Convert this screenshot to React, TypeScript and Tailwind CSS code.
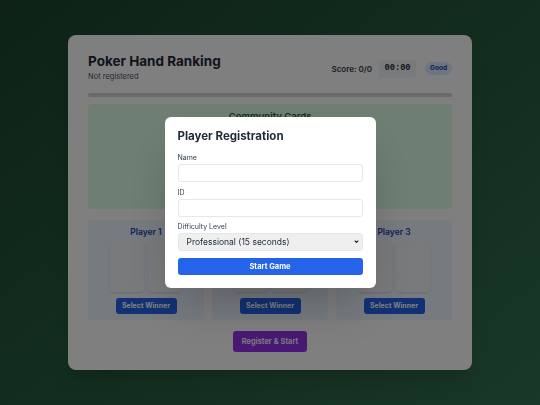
import { useState } from "react"

const players = ["Player 1", "Player 2", "Player 3"]

function PlayerBox({ name }: { name: string }) {
  return (
    <div className="flex h-[100px] flex-col items-center rounded-[4px] bg-[#eff6ff] pt-[6px]">
      <h3 className="text-[8.5px] font-semibold leading-[12px] text-[#1e40af]">{name}</h3>
      <div className="mt-[5px] flex gap-[4px]">
        <div className="h-[49px] w-[34px] rounded-[3px] bg-[#f3f4f6] shadow-sm" />
        <div className="h-[49px] w-[34px] rounded-[3px] bg-[#f3f4f6] shadow-sm" />
      </div>
      <button className="mt-[6px] h-[16px] w-[61px] rounded-[3px] bg-[#2563eb] text-[7px] font-bold text-white">
        Select Winner
      </button>
    </div>
  )
}

export default function App() {
  const [name, setName] = useState("")
  const [id, setId] = useState("")
  const [level, setLevel] = useState("professional")

  return (
    <div className="relative flex h-[405px] w-full justify-center bg-linear-to-br from-[#1c442e] via-[#255a3c] to-[#32704f] pt-[35px] font-['Inter',sans-serif]">
      {/* game board */}
      <div className="h-[335px] w-[404px] rounded-lg bg-white px-5 pt-[17px] shadow-xl">
        <div className="flex items-center justify-between">
          <div>
            <h1 className="text-[13.5px] font-bold leading-[19px] text-[#1f2937]">Poker Hand Ranking</h1>
            <p className="text-[7.5px] leading-[11px] text-[#4b5563]">Not registered</p>
          </div>
          <div className="mt-[3px] flex items-center gap-[7px]">
            <span className="text-[8px] font-semibold text-[#374151]">Score: 0/0</span>
            <span className="flex h-[18px] w-[37px] items-center justify-center rounded-[3px] bg-[#f3f4f6] font-['Liberation_Mono',monospace] text-[8.7px] font-bold text-[#1f2937]">
              00:00
            </span>
            <span className="ml-[2px] rounded-full bg-[#dbeafe] px-[5px] py-[2px] text-[6.5px] font-bold text-[#1e40af]">Good</span>
          </div>
        </div>

        <div className="mt-[11px] h-[4px] w-full rounded-full bg-[#d1d5db]" />

        <div className="mt-[7px] h-[105px] rounded-[4px] bg-[#dcfce7] pt-[6px] text-center">
          <h2 className="text-[9.5px] font-semibold leading-[13px] text-[#166534]">Community Cards</h2>
        </div>

        <div className="mt-[11px] grid grid-cols-3 gap-2">
          {players.map((p) => (
            <PlayerBox key={p} name={p} />
          ))}
        </div>

        <div className="mt-[11px] flex justify-center">
          <button className="h-[21px] w-[74px] rounded-[3px] bg-[#9333ea] text-[7.5px] font-semibold text-white">
            Register &amp; Start
          </button>
        </div>
      </div>

      {/* registration modal */}
      <div className="fixed inset-0 flex items-center justify-center bg-black/50">
        <div className="w-[211px] rounded-md bg-white px-[13px] pt-[11px] pb-[13px] shadow-2xl">
          <h2 className="text-[11.5px] font-bold leading-[16px] text-[#1f2937]">Player Registration</h2>
          <label className="mt-[9px] block text-[7px] leading-[10px] text-[#374151]">Name</label>
          <input
            value={name}
            onChange={(e) => setName(e.target.value)}
            className="mt-px block h-[18px] w-full rounded-[3px] border border-[#e5e7eb] px-2 text-[8px]"
          />
          <label className="mt-[6px] block text-[7px] leading-[10px] text-[#374151]">ID</label>
          <input
            value={id}
            onChange={(e) => setId(e.target.value)}
            className="mt-px block h-[18px] w-full rounded-[3px] border border-[#e5e7eb] px-2 text-[8px]"
          />
          <label className="mt-[5px] block text-[7px] leading-[10px] text-[#374151]">Difficulty Level</label>
          <div className="relative mt-px">
            <select
              value={level}
              onChange={(e) => setLevel(e.target.value)}
              className="block h-[18px] w-full appearance-none rounded-[3px] border border-[#e5e7eb] bg-[#efefef] px-[8px] text-[8.5px] text-[#1f2937]"
            >
              <option value="beginner">Beginner (30 seconds)</option>
              <option value="professional">Professional (15 seconds)</option>
            </select>
            <svg
              viewBox="0 0 8 5"
              className="pointer-events-none absolute top-[7px] right-[4px] h-[3px] w-[5px]"
              fill="none"
              stroke="#111827"
              strokeWidth={1.8}
            >
              <path d="M1 1l3 3 3-3" />
            </svg>
          </div>
          <button className="mt-[7px] h-[17px] w-full rounded-[3px] bg-[#2563eb] text-[7.5px] font-bold text-white">
            Start Game
          </button>
        </div>
      </div>
    </div>
  )
}
